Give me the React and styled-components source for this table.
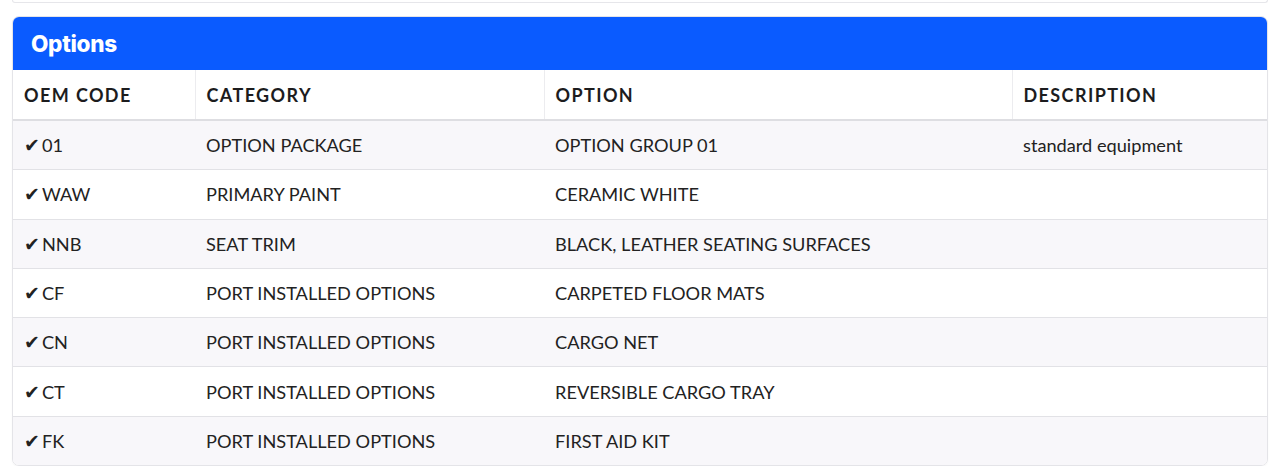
import React from 'react';
import styled, {createGlobalStyle} from 'styled-components';

const GlobalStyle = createGlobalStyle`
  body {
    margin: 0;
    background: #fff;
    font-family: Lato, 'Open Sans', sans-serif;
    color: #222;
  }
`;

const Page = styled.div`
  padding: 0 12px;
`;

const PrevCard = styled.div`
  height: 2px;
  border: 1px solid #e6e6ea;
  border-top: none;
  border-radius: 0 0 6px 6px;
  margin-bottom: 13px;
`;

const Card = styled.section`
  border: 1px solid #e4e4e8;
  border-radius: 7px;
  overflow: hidden;
  box-shadow: 0 1px 2px rgba(0, 0, 0, 0.04);
`;

const CardHeader = styled.header`
  background: #0a5bff;
  height: 53px;
  display: flex;
  align-items: center;
  padding: 0 18px;
`;

const Title = styled.h2`
  margin: 0;
  color: #fff;
  font-family: Inter, 'Open Sans', sans-serif;
  font-weight: 800;
  font-size: 22.5px;
  letter-spacing: -0.3px;
`;

const Table = styled.table`
  width: 100%;
  border-collapse: collapse;
  table-layout: fixed;
`;

const Th = styled.th`
  text-align: left;
  height: 49px;
  padding: 0 11px;
  font-size: 18px;
  font-weight: 700;
  letter-spacing: 1.4px;
  color: #1c1c1e;
  border-bottom: 2px solid #dedee2;
  border-left: 1px solid #ececef;
  &:first-child {
    border-left: none;
  }
`;

const Tr = styled.tr`
  background: ${props => (props.$striped ? '#f8f7fa' : '#fff')};
  border-top: 1px solid #e2e2e6;
  &:first-child {
    border-top: none;
  }
`;

const Td = styled.td`
  height: 48.3px;
  padding: 0 11px;
  font-size: 18.2px;
  color: #222;
`;

const Check = styled.span`
  font-family: 'DejaVu Sans', sans-serif;
  font-size: 19px;
  margin-right: 2px;
`;

const options = [
  {code: '01', category: 'OPTION PACKAGE', option: 'OPTION GROUP 01', description: 'standard equipment'},
  {code: 'WAW', category: 'PRIMARY PAINT', option: 'CERAMIC WHITE', description: ''},
  {code: 'NNB', category: 'SEAT TRIM', option: 'BLACK, LEATHER SEATING SURFACES', description: ''},
  {code: 'CF', category: 'PORT INSTALLED OPTIONS', option: 'CARPETED FLOOR MATS', description: ''},
  {code: 'CN', category: 'PORT INSTALLED OPTIONS', option: 'CARGO NET', description: ''},
  {code: 'CT', category: 'PORT INSTALLED OPTIONS', option: 'REVERSIBLE CARGO TRAY', description: ''},
  {code: 'FK', category: 'PORT INSTALLED OPTIONS', option: 'FIRST AID KIT', description: ''},
];

function App() {
  return (
    <Page>
      <GlobalStyle />
      <PrevCard />
      <Card>
        <CardHeader>
          <Title>Options</Title>
        </CardHeader>
        <Table>
          <colgroup>
            <col style={{width: '182px'}} />
            <col style={{width: '349px'}} />
            <col style={{width: '468px'}} />
            <col />
          </colgroup>
          <thead>
            <tr>
              <Th>OEM CODE</Th>
              <Th>CATEGORY</Th>
              <Th>OPTION</Th>
              <Th>DESCRIPTION</Th>
            </tr>
          </thead>
          <tbody>
            {options.map((item, index) => (
              <Tr key={item.code} $striped={index % 2 === 0}>
                <Td>
                  <Check>✔</Check>
                  {item.code}
                </Td>
                <Td>{item.category}</Td>
                <Td>{item.option}</Td>
                <Td>{item.description}</Td>
              </Tr>
            ))}
          </tbody>
        </Table>
      </Card>
    </Page>
  );
}

export default App;
